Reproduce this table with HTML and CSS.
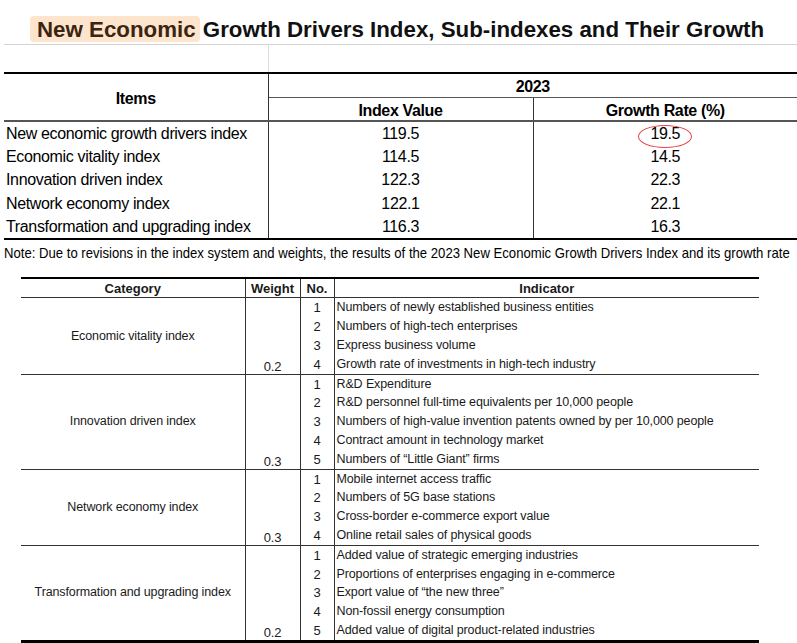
FILE: index.html
```html
<!DOCTYPE html>
<html>
<head>
<meta charset="utf-8">
<link rel="stylesheet" href="styles.css">
</head>
<body>
<div class="page">
  <h1 class="title"><span class="hl">New Economic</span> Growth Drivers Index, Sub-indexes and Their Growth</h1>

  <table class="t1">
    <colgroup><col class="c-items"><col class="c-val"><col class="c-rate"></colgroup>
    <tr class="blank"><td></td><td colspan="2"></td></tr>
    <tr class="h1row"><th rowspan="2" class="items">Items</th><th colspan="2" class="year">2023</th></tr>
    <tr class="h2row"><th class="sub">Index Value</th><th class="sub">Growth Rate (%)</th></tr>
    <tr class="first"><td class="name">New economic growth drivers index</td><td class="num">119.5</td><td class="num"><span class="circled">19.5</span></td></tr>
    <tr><td class="name">Economic vitality index</td><td class="num">114.5</td><td class="num">14.5</td></tr>
    <tr><td class="name">Innovation driven index</td><td class="num">122.3</td><td class="num">22.3</td></tr>
    <tr><td class="name">Network economy index</td><td class="num">122.1</td><td class="num">22.1</td></tr>
    <tr class="last"><td class="name">Transformation and upgrading index</td><td class="num">116.3</td><td class="num">16.3</td></tr>
  </table>

  <p class="note"><span class="note-text">Note: Due to revisions in the index system and weights, the results of the 2023 New Economic Growth Drivers Index and its growth rate</span></p>

  <table class="t2">
    <colgroup><col class="k-cat"><col class="k-w"><col class="k-no"><col class="k-ind"></colgroup>
    <tr class="hd"><th>Category</th><th>Weight</th><th>No.</th><th>Indicator</th></tr>

    <tr class="gs"><td rowspan="4" class="cat">Economic vitality index</td><td rowspan="4" class="w">0.2</td><td class="no">1</td><td class="ind">Numbers of newly established business entities</td></tr>
    <tr><td class="no">2</td><td class="ind">Numbers of high-tech enterprises</td></tr>
    <tr><td class="no">3</td><td class="ind">Express business volume</td></tr>
    <tr><td class="no">4</td><td class="ind">Growth rate of investments in high-tech industry</td></tr>

    <tr class="gs"><td rowspan="5" class="cat">Innovation driven index</td><td rowspan="5" class="w">0.3</td><td class="no">1</td><td class="ind">R&amp;D Expenditure</td></tr>
    <tr><td class="no">2</td><td class="ind">R&amp;D personnel full-time equivalents per 10,000 people</td></tr>
    <tr><td class="no">3</td><td class="ind">Numbers of high-value invention patents owned by per 10,000 people</td></tr>
    <tr><td class="no">4</td><td class="ind">Contract amount in technology market</td></tr>
    <tr><td class="no">5</td><td class="ind">Numbers of “Little Giant” firms</td></tr>

    <tr class="gs"><td rowspan="4" class="cat">Network economy index</td><td rowspan="4" class="w">0.3</td><td class="no">1</td><td class="ind">Mobile internet access traffic</td></tr>
    <tr><td class="no">2</td><td class="ind">Numbers of 5G base stations</td></tr>
    <tr><td class="no">3</td><td class="ind">Cross-border e-commerce export value</td></tr>
    <tr><td class="no">4</td><td class="ind">Online retail sales of physical goods</td></tr>

    <tr class="gs"><td rowspan="5" class="cat end">Transformation and upgrading index</td><td rowspan="5" class="w end">0.2</td><td class="no">1</td><td class="ind">Added value of strategic emerging industries</td></tr>
    <tr><td class="no">2</td><td class="ind">Proportions of enterprises engaging in e-commerce</td></tr>
    <tr><td class="no">3</td><td class="ind">Export value of “the new three”</td></tr>
    <tr><td class="no">4</td><td class="ind">Non-fossil energy consumption</td></tr>
    <tr class="endrow"><td class="no">5</td><td class="ind">Added value of digital product-related industries</td></tr>
  </table>
</div>
</body>
</html>
```

FILE: styles.css
```css
html, body {
  margin: 0;
  padding: 0;
  background: #fff;
}
body {
  font-family: "Liberation Sans", Arial, sans-serif;
  color: #000;
  width: 797px;
  height: 643px;
  overflow: hidden;
}
.page {
  padding-top: 16px;
}
.title {
  margin: 0 0 0 30px;
  height: 28px;
  font-size: 22.3px;
  line-height: 26px;
  font-weight: bold;
  color: #111;
  white-space: nowrap;
}
.hl {
  display: inline-block;
  background: #fde4cd;
  color: #3b2410;
  border-radius: 4px;
  padding: 1px 4px 0 7px;
  height: 25px;
  margin-right: -3px;
}

/* ---------- table 1 ---------- */
.t1 {
  margin-left: 4px;
  width: 793px;
  border-collapse: collapse;
  table-layout: fixed;
  font-size: 16px;
  letter-spacing: -0.35px;
}
.c-items { width: 264px; }
.c-val { width: 265px; }
.c-rate { width: 264px; }
.t1 td, .t1 th {
  padding: 0;
}
.t1 .blank td {
  height: 27px;
  border-top: 1px solid #d4d4d4;
}
.t1 .blank td:first-child {
  border-right: 1px solid #dcdcdc;
}
.t1 .h1row th {
  border-top: 2px solid #000;
}
.t1 th {
  font-weight: bold;
  text-align: center;
}
.t1 .items {
  border-right: 1px solid #333;
  vertical-align: middle;
  padding-top: 3px;
}
.t1 .year {
  height: 20px;
  border-bottom: 1px solid #555;
  vertical-align: middle;
  padding-top: 3px;
}
.t1 .sub {
  height: 19px;
  vertical-align: middle;
  padding-top: 3px;
}
.t1 .h2row th:first-child {
  border-right: 1px solid #333;
}
.t1 .first td {
  border-top: 2px solid #555;
}
.t1 td.name {
  padding-left: 2px;
  border-right: 1px solid #333;
  white-space: nowrap;
}
.t1 td {
  height: 23.3px;
  vertical-align: middle;
}
.t1 td.num {
  text-align: center;
}
.t1 td.num:nth-child(2) {
  border-right: 1px solid #333;
}
.t1 .last td {
  border-bottom: 2px solid #000;
}
.circled {
  position: relative;
  display: inline-block;
}
.circled::after {
  content: "";
  position: absolute;
  left: -12px;
  right: -12px;
  top: 0px;
  bottom: -5px;
  border: 1px solid #e8434a;
  border-radius: 50%;
}

.note {
  margin: 0;
  padding: 4px 0 0 4px;
  height: 33px;
  font-size: 15px;
  line-height: 18px;
  white-space: nowrap;
}
.note-text {
  display: inline-block;
  transform: scaleX(0.875);
  transform-origin: 0 0;
}

/* ---------- table 2 ---------- */
.t2 {
  margin-left: 21px;
  width: 738px;
  border-collapse: collapse;
  table-layout: fixed;
  font-size: 12.5px;
  letter-spacing: -0.12px;
  color: #1a1a1a;
}
.k-cat { width: 224px; }
.k-w { width: 55px; }
.k-no { width: 34px; }
.k-ind { width: 425px; }
.t2 th, .t2 td {
  padding: 0;
  height: 18.8px;
  line-height: 15px;
}
.t2 .hd th {
  font-weight: bold;
  border-top: 2px solid #000;
  border-bottom: 1px solid #333;
  height: 18px;
  text-align: center;
  font-size: 13px;
  letter-spacing: 0;
}
.t2 .hd th + th,
.t2 td.w, .t2 td.no {
  border-left: 1px solid #333;
}
.t2 td.ind {
  border-left: 1px solid #333;
  padding-left: 2px;
  white-space: nowrap;
}
.t2 .gs td {
  border-top: 1px solid #333;
}
.t2 .hd + .gs td {
  border-top: none;
}
.t2 td.cat {
  text-align: center;
  vertical-align: middle;
}
.t2 td.w {
  text-align: center;
  vertical-align: bottom;
  font-size: 13px;
}
.t2 td.no {
  text-align: center;
  font-size: 13px;
}
.t2 .endrow td, .t2 td.end {
  border-bottom: 3px solid #000;
}
```
